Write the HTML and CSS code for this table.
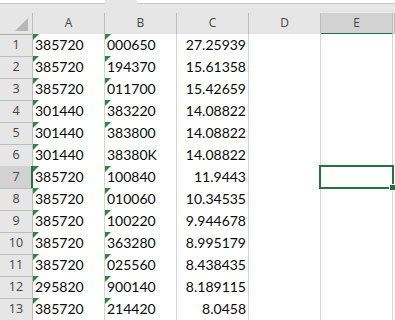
FILE: index.html
```html
<!doctype html>
<html lang="en">
<head>
  <meta charset="UTF-8">
  <title>Sheet1</title>
  <link rel="stylesheet" href="styles.css">
</head>
<body>
  <div class="topbar">
    <div class="namebox"></div>
    <div class="gap"></div>
    <div class="formula"></div>
  </div>
  <div class="spacer"></div>
  <div class="sheet">
    <div class="row head">
      <div class="rh corner">
        <svg width="14" height="14" viewBox="0 0 14 14"><polygon points="13,0 13,13 0,13" fill="#b7b7b7"/></svg>
      </div>
      <div class="ch">A</div>
      <div class="ch">B</div>
      <div class="ch">C</div>
      <div class="ch">D</div>
      <div class="ch sel">E</div>
      <div class="ch"></div>
    </div>
    <div class="row"><div class="rh">1</div><div class="c t">385720</div><div class="c t">000650</div><div class="c n">27.25939</div><div class="c"></div><div class="c"></div><div class="c"></div></div>
    <div class="row"><div class="rh">2</div><div class="c t">385720</div><div class="c t">194370</div><div class="c n">15.61358</div><div class="c"></div><div class="c"></div><div class="c"></div></div>
    <div class="row"><div class="rh">3</div><div class="c t">385720</div><div class="c t">011700</div><div class="c n">15.42659</div><div class="c"></div><div class="c"></div><div class="c"></div></div>
    <div class="row"><div class="rh">4</div><div class="c t">301440</div><div class="c t">383220</div><div class="c n">14.08822</div><div class="c"></div><div class="c"></div><div class="c"></div></div>
    <div class="row"><div class="rh">5</div><div class="c t">301440</div><div class="c t">383800</div><div class="c n">14.08822</div><div class="c"></div><div class="c"></div><div class="c"></div></div>
    <div class="row"><div class="rh">6</div><div class="c t">301440</div><div class="c">38380K</div><div class="c n">14.08822</div><div class="c"></div><div class="c"></div><div class="c"></div></div>
    <div class="row"><div class="rh sel">7</div><div class="c t">385720</div><div class="c t">100840</div><div class="c n">11.9443</div><div class="c"></div><div class="c"></div><div class="c"></div></div>
    <div class="row"><div class="rh">8</div><div class="c t">385720</div><div class="c t">010060</div><div class="c n">10.34535</div><div class="c"></div><div class="c"></div><div class="c"></div></div>
    <div class="row"><div class="rh">9</div><div class="c t">385720</div><div class="c t">100220</div><div class="c n">9.944678</div><div class="c"></div><div class="c"></div><div class="c"></div></div>
    <div class="row"><div class="rh">10</div><div class="c t">385720</div><div class="c t">363280</div><div class="c n">8.995179</div><div class="c"></div><div class="c"></div><div class="c"></div></div>
    <div class="row"><div class="rh">11</div><div class="c t">385720</div><div class="c t">025560</div><div class="c n">8.438435</div><div class="c"></div><div class="c"></div><div class="c"></div></div>
    <div class="row"><div class="rh">12</div><div class="c t">295820</div><div class="c t">900140</div><div class="c n">8.189115</div><div class="c"></div><div class="c"></div><div class="c"></div></div>
    <div class="row"><div class="rh">13</div><div class="c t">385720</div><div class="c t">214420</div><div class="c n">8.0458</div><div class="c"></div><div class="c"></div><div class="c"></div></div>
    <div class="selection"><span class="handle"></span></div>
  </div>
</body>
</html>
```
FILE: styles.css
```css
body {
  margin: 0;
  padding: 0;
  width: 395px;
  height: 320px;
  overflow: hidden;
  background-color: #e6e6e6;
  font-family: Lato, "Open Sans", sans-serif;
}

.topbar {
  display: flex;
  height: 4px;
}

.namebox,
.formula {
  background-color: #ffffff;
  border-bottom: solid 1px #c6c6c6;
  box-sizing: border-box;
}

.namebox {
  width: 105px;
}

.gap {
  width: 32px;
}

.formula {
  flex: 1;
}

.spacer {
  height: 9px;
}

.sheet {
  position: relative;
}

.row {
  display: grid;
  grid-template-columns: 33px repeat(5, 72px) 1fr;
  height: 22px;
}

.row.head {
  height: 21px;
}

.row > div {
  box-sizing: border-box;
  border-right: solid 1px #d4d4d4;
  border-bottom: solid 1px #d4d4d4;
}

.rh,
.ch {
  color: #444444;
  font-family: "Open Sans", sans-serif;
  text-align: center;
}

.row > .rh,
.row > .ch {
  border-color: #bcbcbc;
}

.ch {
  font-size: 12px;
  line-height: 20px;
}

.row.head > div {
  border-bottom-color: #ababab;
}

.rh {
  font-size: 12.5px;
  line-height: 22px;
}

.corner {
  display: flex;
  align-items: flex-end;
  justify-content: flex-end;
  padding: 0 3px 2px 0;
}

.row > .ch.sel {
  background-color: #d2d2d2;
  border-bottom: solid 2px #217346;
}

.row > .rh.sel {
  background-color: #d2d2d2;
  border-right: solid 2px #217346;
  padding-left: 1px;
}

.c {
  position: relative;
  background-color: #ffffff;
  color: #0a0a0a;
  font-size: 14px;
  line-height: 22px;
  padding: 0 2px;
  white-space: nowrap;
  overflow: hidden;
}

.c.n {
  text-align: right;
}

.c.t::before {
  content: "";
  position: absolute;
  top: 0;
  left: 0;
  border-top: solid 6px #2e8540;
  border-right: solid 6px transparent;
}

.selection {
  position: absolute;
  left: 319px;
  top: 152px;
  width: 75px;
  height: 24px;
  box-sizing: border-box;
  border: solid 2px #217346;
}

.handle {
  position: absolute;
  right: -4px;
  bottom: -4px;
  width: 5px;
  height: 5px;
  background-color: #217346;
  border: solid 1px #ffffff;
}
```
